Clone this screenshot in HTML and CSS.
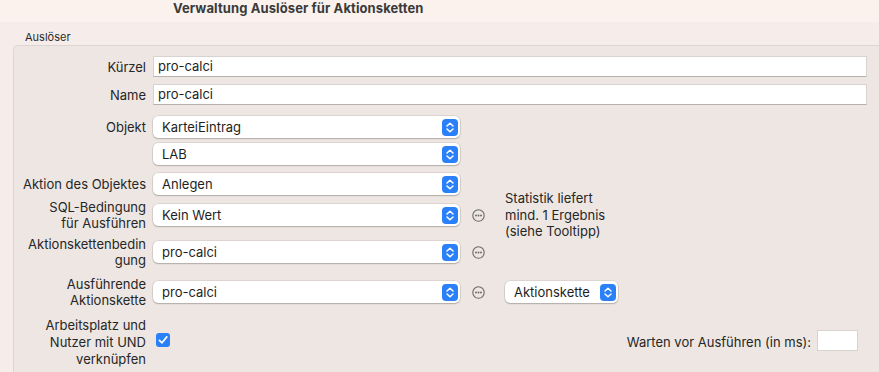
FILE: index.html
```html
<!DOCTYPE html>
<html lang="de">
  <head>
    <meta charset="UTF-8" />
    <title>Verwaltung Auslöser für Aktionsketten</title>
    <link rel="stylesheet" href="styles.css">
  </head>
  <body>
    <div class="titlebar">Verwaltung Auslöser für Aktionsketten</div>

    <div class="group-label">Auslöser</div>

    <div class="group-box">
      <div class="row row-kuerzel">
        <label class="label">Kürzel</label>
        <div class="text-field wide">pro-calci</div>
      </div>

      <div class="row row-name">
        <label class="label">Name</label>
        <div class="text-field wide">pro-calci</div>
      </div>

      <div class="row row-objekt">
        <label class="label">Objekt</label>
        <div class="popup">
          <span>KarteiEintrag</span>
          <svg class="stepper" viewBox="0 0 16 17"><rect width="16" height="17" rx="4"/><path d="M5 7 L8 4.2 L11 7 M5 10 L8 12.8 L11 10"/></svg>
        </div>
      </div>

      <div class="row row-lab">
        <label class="label"></label>
        <div class="popup">
          <span>LAB</span>
          <svg class="stepper" viewBox="0 0 16 17"><rect width="16" height="17" rx="4"/><path d="M5 7 L8 4.2 L11 7 M5 10 L8 12.8 L11 10"/></svg>
        </div>
      </div>

      <div class="row row-aktion">
        <label class="label">Aktion des Objektes</label>
        <div class="popup">
          <span>Anlegen</span>
          <svg class="stepper" viewBox="0 0 16 17"><rect width="16" height="17" rx="4"/><path d="M5 7 L8 4.2 L11 7 M5 10 L8 12.8 L11 10"/></svg>
        </div>
      </div>

      <div class="row row-sql">
        <label class="label">SQL-Bedingung<br>für Ausführen</label>
        <div class="popup">
          <span>Kein Wert</span>
          <svg class="stepper" viewBox="0 0 16 17"><rect width="16" height="17" rx="4"/><path d="M5 7 L8 4.2 L11 7 M5 10 L8 12.8 L11 10"/></svg>
        </div>
        <svg class="more" viewBox="0 0 13 13"><circle cx="6.5" cy="6.5" r="5.7"/><circle class="dot" cx="4" cy="6.5" r="0.95"/><circle class="dot" cx="6.5" cy="6.5" r="0.95"/><circle class="dot" cx="9" cy="6.5" r="0.95"/></svg>
        <div class="note">Statistik liefert<br>mind. 1 Ergebnis<br>(siehe Tooltipp)</div>
      </div>

      <div class="row row-bedingung">
        <label class="label">Aktionskettenbedin<br>gung</label>
        <div class="popup">
          <span>pro-calci</span>
          <svg class="stepper" viewBox="0 0 16 17"><rect width="16" height="17" rx="4"/><path d="M5 7 L8 4.2 L11 7 M5 10 L8 12.8 L11 10"/></svg>
        </div>
        <svg class="more" viewBox="0 0 13 13"><circle cx="6.5" cy="6.5" r="5.7"/><circle class="dot" cx="4" cy="6.5" r="0.95"/><circle class="dot" cx="6.5" cy="6.5" r="0.95"/><circle class="dot" cx="9" cy="6.5" r="0.95"/></svg>
      </div>

      <div class="row row-kette">
        <label class="label">Ausführende<br>Aktionskette</label>
        <div class="popup">
          <span>pro-calci</span>
          <svg class="stepper" viewBox="0 0 16 17"><rect width="16" height="17" rx="4"/><path d="M5 7 L8 4.2 L11 7 M5 10 L8 12.8 L11 10"/></svg>
        </div>
        <svg class="more" viewBox="0 0 13 13"><circle cx="6.5" cy="6.5" r="5.7"/><circle class="dot" cx="4" cy="6.5" r="0.95"/><circle class="dot" cx="6.5" cy="6.5" r="0.95"/><circle class="dot" cx="9" cy="6.5" r="0.95"/></svg>
        <div class="popup small">
          <span>Aktionskette</span>
          <svg class="stepper" viewBox="0 0 16 17"><rect width="16" height="17" rx="4"/><path d="M5 7 L8 4.2 L11 7 M5 10 L8 12.8 L11 10"/></svg>
        </div>
      </div>

      <div class="row row-check">
        <label class="label">Arbeitsplatz und<br>Nutzer mit UND<br>verknüpfen</label>
        <svg class="checkbox" viewBox="0 0 14 14"><rect width="14" height="14" rx="3"/><path d="M3.4 7.3 L6 9.8 L10.8 3.9"/></svg>
        <div class="wait">
          <span>Warten vor Ausführen (in ms):</span>
          <div class="text-field wait-field"></div>
        </div>
      </div>
    </div>
  </body>
</html>
```

FILE: styles.css
```css
body {
  margin: 0;
  font-family: Inter, "Noto Sans", sans-serif;
  font-size: 13px;
  color: #262626;
  background-color: #f6edea;
  overflow: hidden;
}

.titlebar {
  height: 22px;
  line-height: 17px;
  padding-left: 173px;
  background: #fbf2ee;
  font-weight: bold;
  color: #3a3a3a;
  letter-spacing: 0.1px;
}

.group-label {
  height: 23px;
  line-height: 30px;
  padding-left: 25px;
  font-size: 11px;
  color: #2a2a2a;
}

.group-box {
  margin-left: 13px;
  padding: 10px 12px 20px 0;
  background: #ede6e2;
  border-top: 1px solid #ddd5d1;
  border-left: 1px solid #ddd5d1;
  border-top-left-radius: 5px;
}

.row {
  display: flex;
  align-items: center;
}

.label {
  width: 132px;
  flex: none;
  margin-right: 7px;
  text-align: right;
  line-height: 16px;
  color: #262626;
}

.row-kuerzel { height: 21px; }
.row-name { height: 21px; margin-top: 7px; }
.row-objekt { height: 22px; margin-top: 11px; }
.row-lab { height: 22px; margin-top: 5px; }
.row-aktion { height: 22px; margin-top: 8px; }
.row-sql { height: 30px; margin-top: 5px; }
.row-bedingung { height: 30px; margin-top: 7px; }
.row-kette { height: 30px; margin-top: 10px; }
.row-check { height: 50px; margin-top: 10px; }

.row-check .label {
  line-height: 17px;
  margin-right: 8px;
}

.text-field {
  height: 21px;
  box-sizing: border-box;
  padding-left: 4px;
  line-height: 19px;
  background: #fff;
  border: 1px solid #d9d3cf;
  border-bottom-color: #b7b1ad;
  color: #1e1e1e;
}

.wide {
  flex: 1;
}

.popup {
  width: 307px;
  height: 22px;
  box-sizing: border-box;
  padding: 0 2px 0 9px;
  display: flex;
  align-items: center;
  justify-content: space-between;
  background: #fff;
  border-radius: 5px;
  box-shadow: 0 0 0 0.5px rgba(0, 0, 0, 0.14), 0 1px 1.5px rgba(0, 0, 0, 0.2);
  color: #1e1e1e;
}

.popup.small {
  width: 113px;
  margin-left: 20px;
}

.stepper {
  width: 16px;
  height: 17px;
  flex: none;
}

.stepper rect {
  fill: #2a80f8;
}

.stepper path {
  fill: none;
  stroke: #fff;
  stroke-width: 1.5;
  stroke-linecap: round;
  stroke-linejoin: round;
}

.more {
  width: 13px;
  height: 13px;
  margin-left: 12px;
  flex: none;
}

.more circle {
  fill: none;
  stroke: #6a6a6a;
  stroke-width: 1.1;
}

.more .dot {
  fill: #6a6a6a;
  stroke: none;
}

.note {
  margin-left: 20px;
  line-height: 16.5px;
  color: #262626;
}

.checkbox {
  width: 14px;
  height: 14px;
  margin-left: 2px;
  margin-top: -4px;
  flex: none;
}

.checkbox rect {
  fill: #2a80f8;
}

.checkbox path {
  fill: none;
  stroke: #fff;
  stroke-width: 1.7;
  stroke-linecap: round;
  stroke-linejoin: round;
}

.wait {
  margin-left: auto;
  margin-right: 9px;
  display: flex;
  align-items: center;
  gap: 6px;
  margin-top: -4px;
}

.wait span {
  margin-top: 4px;
}

.wait-field {
  width: 41px;
  height: 21px;
  border-color: #d9d3cf;
}
```
